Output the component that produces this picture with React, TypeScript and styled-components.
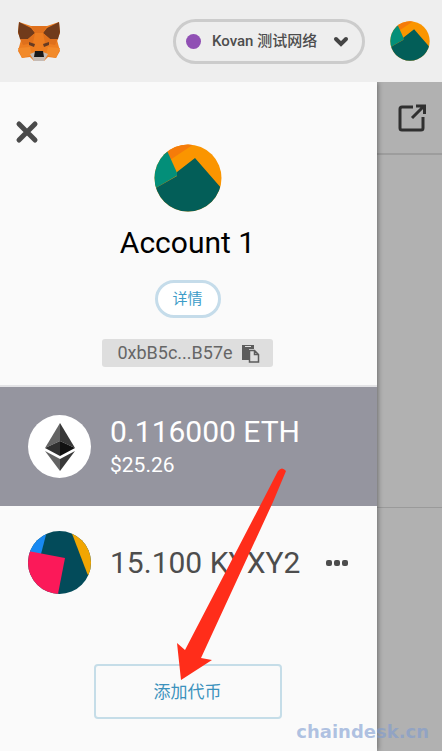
import React from "react";
import styled, { createGlobalStyle } from "styled-components";

const GlobalStyle = createGlobalStyle`
  *, *::before, *::after { box-sizing: border-box; }
  html, body, #root { height: 100%; }
  body {
    margin: 0;
    background: #fafafa;
    color: #4d4d4d;
    font-family: Roboto, "Noto Sans CJK SC", sans-serif;
  }
  button, select { font-family: inherit; color: inherit; }
`;

const Page = styled.div`
  position: relative;
  display: flex;
  flex-direction: column;
  min-height: 100%;
  overflow: hidden;
`;

const Header = styled.header`
  display: flex;
  align-items: center;
  height: 82px;
  padding: 0 12px 0 17px;
  background: #eeeeee;
`;

const NetworkPicker = styled.label`
  display: flex;
  align-items: center;
  width: 192px;
  height: 45px;
  margin-left: auto;
  margin-right: 25px;
  padding: 0 13px 0 10px;
  border: 3px solid #cccccc;
  border-radius: 23px;
`;

const NetworkDot = styled.span`
  width: 15px;
  height: 15px;
  margin-right: 11px;
  border-radius: 50%;
  background: #9050b4;
`;

const NetworkSelect = styled.select`
  flex: 1;
  min-width: 0;
  padding: 0;
  border: 0;
  outline: 0;
  appearance: none;
  background: transparent;
  font-size: 15px;
  line-height: 20px;
  font-weight: 500;
`;

const IconButton = styled.button`
  display: inline-flex;
  align-items: center;
  justify-content: center;
  padding: 0;
  border: 0;
  background: transparent;
  line-height: 0;
  cursor: pointer;
`;

const Body = styled.div`
  flex: 1;
  display: grid;
  grid-template-columns: minmax(0, 1fr) 65px;
`;

const Sidebar = styled.main`
  position: relative;
  display: flex;
  flex-direction: column;
  background: #fafafa;
  box-shadow: 1px 0 5px rgba(0, 0, 0, 0.4);
  clip-path: inset(0 -8px 0 0);
`;

const Account = styled.section`
  display: flex;
  flex-direction: column;
  align-items: center;
  padding: 38px 17px 18px 15px;
`;

const CloseButton = styled(IconButton)`
  align-self: flex-start;
  height: 24px;
`;

const AccountName = styled.h1`
  margin: 13px 0 19px;
  color: #000000;
  font-size: 30px;
  line-height: 36px;
  font-weight: 400;
`;

const DetailsButton = styled.button`
  height: 38px;
  width: 66px;
  padding: 0;
  border: 3px solid #c5dcea;
  border-radius: 19px;
  background: #ffffff;
  && { color: #3c9cc8; }
  font-size: 15px;
  line-height: 20px;
`;

const AddressButton = styled.button`
  display: flex;
  align-items: center;
  gap: 9px;
  height: 28px;
  margin-top: 21px;
  padding: 0 13px 0 15px;
  border: 0;
  border-radius: 3px;
  background: #dedede;
  && { color: #666666; }
  font-size: 18px;
  line-height: 24px;
`;

const Tokens = styled.section`
  position: relative;
  display: flex;
  flex-direction: column;
  border-top: 2px solid #e3e3e6;
`;

const TokenRow = styled.div<{ $active?: boolean }>`
  display: flex;
  align-items: center;
  height: ${(p) => (p.$active ? 119 : 113)}px;
  padding: 0 28px;
  gap: 19px;
  background: ${(p) => (p.$active ? "#95959f" : "transparent")};
  color: ${(p) => (p.$active ? "#ffffff" : "#4d4d4d")};
`;

const TokenText = styled.div`
  flex: 1;
  min-width: 0;
  white-space: nowrap;
`;

const Amount = styled.div`
  font-size: 30px;
  line-height: 36px;
`;

const Fiat = styled.div`
  font-size: 21px;
  line-height: 30px;
`;

const AddTokenButton = styled.button`
  align-self: center;
  width: 188px;
  height: 55px;
  margin: 45px 2px 32px 0;
  border: 2px solid #c5dde8;
  border-radius: 4px;
  background: transparent;
  && { color: #3c92bd; }
  font-size: 17px;
  line-height: 24px;
`;

const Pointer = styled.svg`
  position: absolute;
  top: 80px;
  left: calc(50% - 13px);
  pointer-events: none;
`;

const Backdrop = styled.aside`
  display: flex;
  flex-direction: column;
  background: #b1b1b1;
`;

const BackdropBar = styled.div`
  display: flex;
  align-items: center;
  justify-content: center;
  height: 73px;
  padding-left: 5px;
  border-bottom: 2px solid #9d9d9d;
`;

const BackdropPanel = styled.div`
  height: 353px;
  border-bottom: 1px solid #9a9a9a;
`;

const Watermark = styled.div`
  position: absolute;
  right: 13px;
  bottom: 8px;
  color: rgba(125, 155, 208, 0.6);
  font-family: "DejaVu Sans", sans-serif;
  font-size: 18px;
  line-height: 22px;
  font-weight: 700;
`;

const Fox = () => (
  <svg width="44" height="42" viewBox="0 0 44 42" role="img" aria-label="MetaMask">
    <path d="M2 2 14 6H30L42 2 43 13 40 20 43 31 39 38 31 37 27 41H17L13 37 5 38 1 31 4 20 1 13Z" fill="#ed7d20" />
    <path d="M2 2 14 8 18 13 11 19 3 19 1 12ZM42 2 30 8 26 13 33 19 41 19 43 12Z" fill="#713b1b" />
    <path d="M14 6H30L26 13H18ZM3 19 11 19 18 13 16 23 6 25Z" fill="#df701c" />
    <path d="M41 19 33 19 26 13 28 23 38 25Z" fill="#df701c" />
    <path d="M1 28 13 27 15 35 5 38ZM43 28 31 27 29 35 39 38Z" fill="#f28a2a" />
    <path d="M12 22 18 24 17 27 12 25ZM32 22 26 24 27 27 32 25Z" fill="#663b23" />
    <path d="M13 34 18 32H26L31 34 27 41H17Z" fill="#c5bbb5" />
    <path d="M18 31H26L27 37H17Z" fill="#171719" />
  </svg>
);

const Avatar = ({ size }: { size: number }) => (
  <svg width={size} height={size} viewBox="0 0 68 68" aria-hidden="true">
    <clipPath id={`avatar-${size}`}><circle cx="34" cy="34" r="33.5" /></clipPath>
    <g clipPath={`url(#avatar-${size})`}>
      <path d="M0 0H68V68H0Z" fill="#fa9500" />
      <path d="M0 0H40L16 16Z" fill="#f57b0a" />
      <path d="M0 0H10L24 31 0 45Z" fill="#038f79" />
      <path d="M0 45 23 32V28L41 14 68 45V68H0Z" fill="#035e58" />
    </g>
  </svg>
);

const EthLogo = () => (
  <svg width="63" height="63" viewBox="0 0 63 63" aria-hidden="true">
    <circle cx="31.5" cy="31.5" r="31.5" fill="#fff" />
    <path d="M32 8 17 33 32 26Z" fill="#646464" />
    <path d="M32 8 47 33 32 26Z" fill="#393939" />
    <path d="M17 33 32 26V41Z" fill="#303030" />
    <path d="M47 33 32 26V41Z" fill="#111" />
    <path d="M17 36 32 44V56Z" fill="#646464" />
    <path d="M47 36 32 44V56Z" fill="#393939" />
  </svg>
);

const KyxyLogo = () => (
  <svg width="63" height="63" viewBox="0 0 63 63" aria-hidden="true">
    <clipPath id="kyxy"><circle cx="31.5" cy="31.5" r="31.5" /></clipPath>
    <g clipPath="url(#kyxy)">
      <path d="M0 0H63V63H0Z" fill="#034b5a" />
      <path d="M0 0H19L13 23H0Z" fill="#1889f2" />
      <path d="M43 0H63V50L59 42Z" fill="#f2a602" />
      <path d="M0 20 37 27 30 63H0Z" fill="#fb1959" />
    </g>
  </svg>
);

export default function App() {
  return (
    <Page>
      <GlobalStyle />
      <Header>
        <Fox />
        <NetworkPicker>
          <NetworkDot />
          <NetworkSelect aria-label="网络" defaultValue="kovan">
            <option value="kovan">Kovan 测试网络</option>
          </NetworkSelect>
          <svg width="16" height="12" viewBox="0 0 16 12" aria-hidden="true">
            <path d="M3 4 8 9 13 4" fill="none" stroke="#444" strokeWidth="4" strokeLinecap="round" />
          </svg>
        </NetworkPicker>
        <IconButton aria-label="Account 1"><Avatar size={40} /></IconButton>
      </Header>
      <Body>
        <Sidebar>
          <Account>
            <CloseButton aria-label="关闭">
              <svg width="24" height="24" viewBox="0 0 24 24">
                <path d="M4 4 20 20M20 4 4 20" stroke="#4a4a4a" strokeWidth="5" strokeLinecap="round" />
              </svg>
            </CloseButton>
            <Avatar size={68} />
            <AccountName>Account 1</AccountName>
            <DetailsButton>详情</DetailsButton>
            <AddressButton>
              0xbB5c...B57e
              <svg width="18" height="19" viewBox="0 0 18 19" aria-hidden="true">
                <path d="M0 1H12V5H7V16H0Z" fill="#5c5c5c" />
                <path d="M3 2.5H9" stroke="#dedede" />
                <path d="M7.5 6.5H12.5L16.5 10.5V18H7.5ZM12.5 6.5V10.5H16.5" fill="#dedede" stroke="#5c5c5c" strokeWidth="1.5" />
              </svg>
            </AddressButton>
          </Account>
          <Tokens>
            <TokenRow $active>
              <EthLogo />
              <TokenText>
                <Amount>0.116000 ETH</Amount>
                <Fiat>$25.26</Fiat>
              </TokenText>
            </TokenRow>
            <TokenRow>
              <KyxyLogo />
              <TokenText>
                <Amount>15.100 KYXY2</Amount>
              </TokenText>
              <IconButton aria-label="更多">
                <svg width="23" height="8" viewBox="0 0 23 8" fill="#4d4d4d">
                  <rect x="0" y="1" width="6" height="6" rx="2" />
                  <rect x="8" y="1" width="6" height="6" rx="2" />
                  <rect x="16" y="1" width="6" height="6" rx="2" />
                </svg>
              </IconButton>
            </TokenRow>
            <AddTokenButton>添加代币</AddTokenButton>
            <Pointer width="112" height="214" viewBox="0 0 112 214" aria-hidden="true">
              <path d="M5 213 1 176 9 183 86 35 102 4Q106-1 110 4L97 35 25 191 36 193Z" fill="#ff2d1a" />
            </Pointer>
          </Tokens>
        </Sidebar>
        <Backdrop>
          <BackdropBar>
            <IconButton aria-label="打开">
              <svg width="28" height="28" viewBox="0 0 28 28" fill="none" stroke="#303030" strokeWidth="3">
                <path d="M15 3H4Q2 3 2 5V24Q2 26 4 26H23Q25 26 25 24V13M14 14 26 2M18 2H26.5V10" />
              </svg>
            </IconButton>
          </BackdropBar>
          <BackdropPanel />
        </Backdrop>
      </Body>
      <Watermark>chaindesk.cn</Watermark>
    </Page>
  );
}
